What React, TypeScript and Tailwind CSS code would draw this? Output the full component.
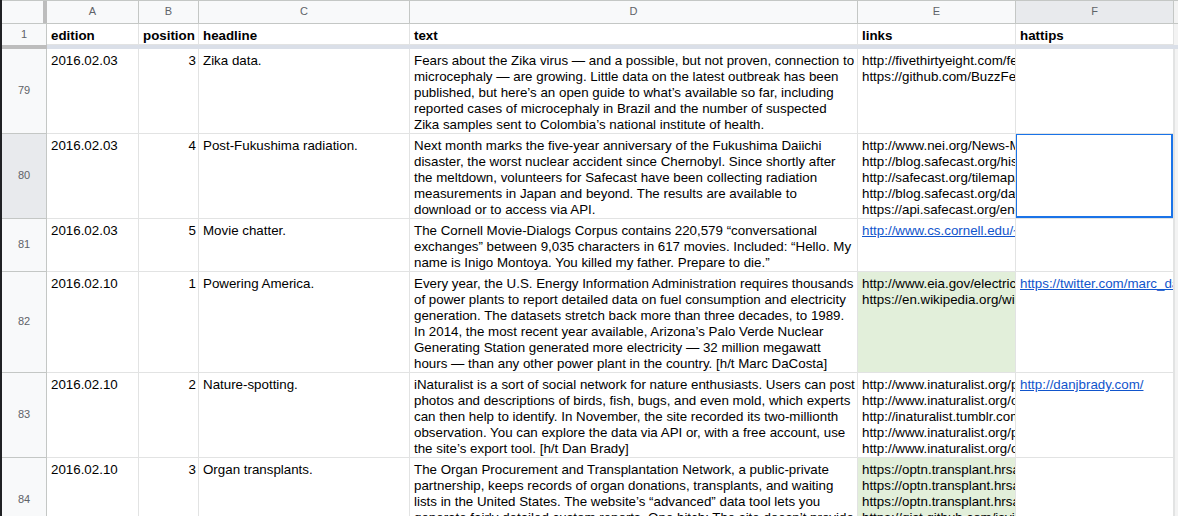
import React from "react";

type Row = {
  n: number;
  h: string;
  edition: string;
  pos: string;
  headline: string;
  text: string[];
  links: string[];
  linksBlue?: boolean;
  green?: boolean;
  hattip?: string;
  selected?: boolean;
};

const rows: Row[] = [
  {
    n: 79,
    h: "h-[85px]",
    edition: "2016.02.03",
    pos: "3",
    headline: "Zika data.",
    text: [
      "Fears about the Zika virus — and a possible, but not proven, connection to",
      "microcephaly — are growing. Little data on the latest outbreak has been",
      "published, but here’s an open guide to what’s available so far, including",
      "reported cases of microcephaly in Brazil and the number of suspected",
      "Zika samples sent to Colombia’s national institute of health.",
    ],
    links: [
      "http://fivethirtyeight.com/features/zika-virus",
      "https://github.com/BuzzFeedNews/zika-data",
    ],
  },
  {
    n: 80,
    h: "h-[85px]",
    edition: "2016.02.03",
    pos: "4",
    headline: "Post-Fukushima radiation.",
    text: [
      "Next month marks the five-year anniversary of the Fukushima Daiichi",
      "disaster, the worst nuclear accident since Chernobyl. Since shortly after",
      "the meltdown, volunteers for Safecast have been collecting radiation",
      "measurements in Japan and beyond. The results are available to",
      "download or to access via API.",
    ],
    links: [
      "http://www.nei.org/News-Media/News/Japan-Nuclear-Update",
      "http://blog.safecast.org/history/",
      "http://safecast.org/tilemap/",
      "http://blog.safecast.org/data/",
      "https://api.safecast.org/en-US",
    ],
    selected: true,
  },
  {
    n: 81,
    h: "h-[53px]",
    edition: "2016.02.03",
    pos: "5",
    headline: "Movie chatter.",
    text: [
      "The Cornell Movie-Dialogs Corpus contains 220,579 “conversational",
      "exchanges” between 9,035 characters in 617 movies. Included: “Hello. My",
      "name is Inigo Montoya. You killed my father. Prepare to die.”",
    ],
    links: ["http://www.cs.cornell.edu/~cristian/Cornell_Movie-Dialogs_Corpus.html"],
    linksBlue: true,
  },
  {
    n: 82,
    h: "h-[101px]",
    edition: "2016.02.10",
    pos: "1",
    headline: "Powering America.",
    text: [
      "Every year, the U.S. Energy Information Administration requires thousands",
      "of power plants to report detailed data on fuel consumption and electricity",
      "generation. The datasets stretch back more than three decades, to 1989.",
      "In 2014, the most recent year available, Arizona’s Palo Verde Nuclear",
      "Generating Station generated more electricity — 32 million megawatt",
      "hours — than any other power plant in the country. [h/t Marc DaCosta]",
    ],
    links: [
      "http://www.eia.gov/electricity/data/eia923/",
      "https://en.wikipedia.org/wiki/Palo_Verde_Nuclear_Generating_Station",
    ],
    green: true,
    hattip: "https://twitter.com/marc_dacosta",
  },
  {
    n: 83,
    h: "h-[85px]",
    edition: "2016.02.10",
    pos: "2",
    headline: "Nature-spotting.",
    text: [
      "iNaturalist is a sort of social network for nature enthusiasts. Users can post",
      "photos and descriptions of birds, fish, bugs, and even mold, which experts",
      "can then help to identify. In November, the site recorded its two-millionth",
      "observation. You can explore the data via API or, with a free account, use",
      "the site’s export tool. [h/t Dan Brady]",
    ],
    links: [
      "http://www.inaturalist.org/pages/api+reference",
      "http://www.inaturalist.org/observations/export",
      "http://inaturalist.tumblr.com/post/two-million",
      "http://www.inaturalist.org/people",
      "http://www.inaturalist.org/observations",
    ],
    hattip: "http://danjbrady.com/",
  },
  {
    n: 84,
    h: "h-[85px]",
    edition: "2016.02.10",
    pos: "3",
    headline: "Organ transplants.",
    text: [
      "The Organ Procurement and Transplantation Network, a public-private",
      "partnership, keeps records of organ donations, transplants, and waiting",
      "lists in the United States. The website’s “advanced” data tool lets you",
      "generate fairly detailed custom reports. One hitch: The site doesn’t provide",
    ],
    links: [
      "https://optn.transplant.hrsa.gov/data/view-data-reports/",
      "https://optn.transplant.hrsa.gov/data/about-data/",
      "https://optn.transplant.hrsa.gov/converge/latestData/",
      "https://gist.github.com/jsvine/organ-transplants",
    ],
    green: true,
  },
];

const cols = "grid grid-cols-[45px_92px_60px_211px_448px_158px_158px_4px]";
const cell = "border-r border-b border-[#e2e3e3] pl-[4px] pr-[2px] pt-[4px] overflow-hidden whitespace-nowrap";

function Lines({ items, link }: { items: string[]; link?: boolean }) {
  return (
    <>
      {items.map((t, i) => (
        <div key={i} className={link ? "text-[#1155cc] underline" : ""}>
          {t}
        </div>
      ))}
    </>
  );
}

export default function App() {
  const letters = ["A", "B", "C", "D", "E", "F"];
  return (
    <div className="flex h-[516px] w-[1178px] overflow-hidden bg-white font-['Liberation_Sans',Arial,sans-serif] text-[13.33px] leading-[15.9px] text-black">
      <div className="w-[2px] shrink-0 bg-[#202124]" />
      <div className="flex-1 flex flex-col">
        {/* column letters */}
        <div className={`${cols} h-[24px] border-t border-[#c4c7c5] shrink-0`}>
          <div className="bg-[#f8f9fa] border-b border-[#c4c7c5] flex">
            <div className="flex-1" />
            <div className="w-[4px] bg-[#bdbdbd]" />
          </div>
          {letters.map((l) => (
            <div
              key={l}
              className={`border-r border-b border-[#c4c7c5] flex items-center justify-center text-[11px] text-[#5f6368] ${
                l === "F" ? "bg-[#e8eaed]" : "bg-[#f8f9fa]"
              }`}
            >
              {l}
            </div>
          ))}
          <div className="bg-[#f3f3f3] border-b border-[#c4c7c5]" />
        </div>

        {/* frozen header row */}
        <div className={`${cols} h-[21px] shrink-0 font-bold`}>
          <div className="bg-[#f8f9fa] border-r border-[#c4c7c5] flex items-center justify-center text-[11px] font-normal text-[#5f6368]">
            1
          </div>
          <div className={cell}>edition</div>
          <div className={cell}>position</div>
          <div className={cell}>headline</div>
          <div className={cell}>text</div>
          <div className={cell}>links</div>
          <div className={cell}>hattips</div>
          <div className="bg-[#f3f3f3]" />
        </div>

        {/* freeze bar */}
        <div className={`${cols} h-[4px] shrink-0`}>
          <div className="bg-[#bdbdbd]" />
          <div className="col-span-6 bg-[#dadfe8]" />
          <div className="bg-[#dadfe8]" />
        </div>

        {rows.map((r) => (
          <div key={r.n} className={`${cols} ${r.h} shrink-0`}>
            <div
              className={`border-r border-b border-[#c4c7c5] flex items-center justify-center text-[11px] text-[#5f6368] ${
                r.selected ? "bg-[#e8eaed]" : "bg-[#f8f9fa]"
              }`}
            >
              {r.n}
            </div>
            <div className={cell}>{r.edition}</div>
            <div className={`${cell} text-right`}>{r.pos}</div>
            <div className={cell}>{r.headline}</div>
            <div className={cell}>
              <Lines items={r.text} />
            </div>
            <div className={`${cell} ${r.green ? "bg-[#e2efda]" : ""}`}>
              <Lines items={r.links} link={r.linksBlue} />
            </div>
            <div className={`${cell} relative`}>
              {r.hattip && <Lines items={[r.hattip]} link />}
              {r.selected && (
                <div className="absolute -top-px -left-px right-0 bottom-0 border-2 border-[#1a73e8]" />
              )}
            </div>
            <div className="bg-[#f3f3f3] border-l border-[#e2e3e3]" />
          </div>
        ))}
      </div>
    </div>
  );
}
